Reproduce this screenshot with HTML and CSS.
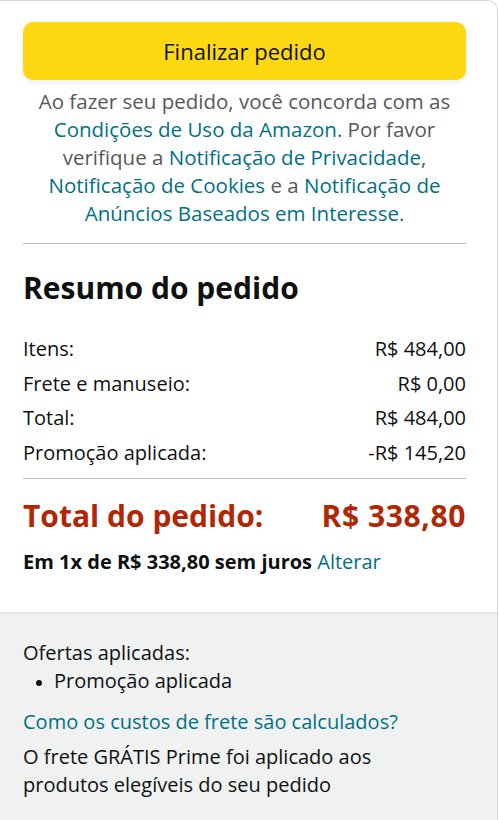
FILE: index.html
```html
<!doctype html>
<html lang="pt-BR">
<head>
  <meta charset="UTF-8" />
  <meta name="viewport" content="width=device-width,initial-scale=1" />
  <title>Resumo do pedido</title>
  <link rel="stylesheet" href="styles.css">
</head>
<body>
  <aside class="summary">
    <div class="top">
      <button class="place-order">Finalizar pedido</button>
      <p class="legal">
        Ao fazer seu pedido, você concorda com as<br>
        <a href="#">Condições de Uso da Amazon</a>. Por favor<br>
        verifique a <a href="#">Notificação de Privacidade</a>,<br>
        <a href="#">Notificação de Cookies</a> e a <a href="#">Notificação de<br>
        Anúncios Baseados em Interesse</a>.
      </p>

      <h2>Resumo do pedido</h2>

      <div class="rows">
        <div class="row"><span>Itens:</span><span>R$ 484,00</span></div>
        <div class="row"><span>Frete e manuseio:</span><span>R$ 0,00</span></div>
        <div class="row"><span>Total:</span><span>R$ 484,00</span></div>
        <div class="row"><span>Promoção aplicada:</span><span>-R$ 145,20</span></div>
      </div>

      <div class="grand">
        <span>Total do pedido:</span>
        <span class="amount">R$ 338,80</span>
      </div>
      <div class="installments">Em 1x de R$ 338,80 sem juros <a href="#">Alterar</a></div>
    </div>

    <div class="offers">
      <div>Ofertas aplicadas:</div>
      <ul>
        <li>Promoção aplicada</li>
      </ul>
      <a class="ship-link" href="#">Como os custos de frete são calculados?</a>
      <p>O frete GRÁTIS Prime foi aplicado aos produtos elegíveis do seu pedido</p>
    </div>
  </aside>
</body>
</html>
```

FILE: styles.css
```css
:root { --teal:#007185; --text:#0f1111; --muted:#565959; --line:#d5d9d9; --red:#b12704; }
*{ box-sizing:border-box; }
body{
  margin:0;
  background:#fff;
  font-family: "Open Sans", "Noto Sans", Arial, sans-serif;
  color: var(--text);
  overflow:hidden;
}
a{ color: var(--teal); text-decoration:none; }

.summary{
  width:498px;
  min-height:820px;
  border-top:1px solid var(--line);
  border-right:1px solid var(--line);
  border-top-right-radius:10px;
  display:flex;
  flex-direction:column;
}
.top{
  padding: 21px 0 0 23px;
  width:466px;
  box-sizing:content-box;
  background:#fff;
}
.place-order{
  display:block;
  width:443px;
  height:58px;
  border:0;
  border-radius:10px;
  background:#ffd814;
  color: var(--text);
  font: 400 22px "Open Sans", "Noto Sans", Arial, sans-serif;
  box-shadow: 0 2px 5px rgba(213,217,217,.5);
}
.legal{
  width:443px;
  margin: 7px 0 0;
  padding: 0 0 16px;
  border-bottom: 1px solid #bbbfbf;
  text-align:center;
  font-size:20.5px;
  line-height:28px;
  color: var(--muted);
}
h2{
  margin: 26px 0 0;
  font-size:30px;
  font-weight:700;
  line-height:36px;
}
.rows{
  margin-top:26px;
  padding-bottom:7px;
  border-bottom:1px solid #bbbfbf;
  width:443px;
}
.row{
  display:flex;
  justify-content:space-between;
  font-size:20px;
  line-height:34.7px;
}
.grand{
  width:443px;
  display:flex;
  justify-content:space-between;
  margin-top:19px;
  font-size:30px;
  font-weight:700;
  line-height:36px;
  color: var(--red);
}
.grand .amount{ letter-spacing:.6px; }
.installments{
  margin-top:15px;
  font-size:20px;
  font-weight:700;
  line-height:26px;
  padding-bottom:37px;
}
.installments a{ font-weight:400; }

.offers{
  flex:1;
  border-top:2px solid #e3e6e6;
  background:#f0f2f2;
  padding: 25px 23px 0;
  font-size:20px;
  line-height:28px;
}
.offers ul{
  margin:0 0 13px;
  padding-left:31px;
}
.offers li::marker{ font-size:16px; }
.ship-link{ display:block; }
.offers p{
  margin: 7px 0 0;
  width:400px;
}
```
